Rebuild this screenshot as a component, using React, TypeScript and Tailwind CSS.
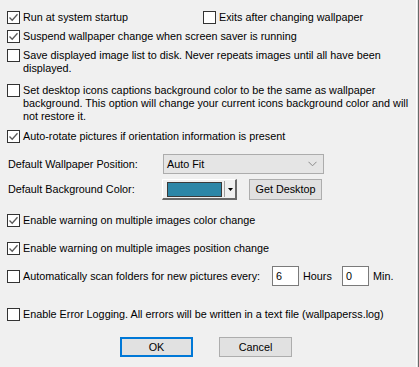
import React from "react";

function Box({ checked }: { checked?: boolean }) {
  return (
    <div className="w-[13px] h-[13px] shrink-0 border border-[#333333] bg-white flex items-center justify-center">
      {checked && (
        <svg width="11" height="11" viewBox="0 0 11 11">
          <path d="M1.5 5.5 L4.2 8.3 L9.5 2.2" fill="none" stroke="#5a5a5a" strokeWidth="1.3" />
        </svg>
      )}
    </div>
  );
}

function Check({ checked, children, className = "" }: { checked?: boolean; children: React.ReactNode; className?: string }) {
  return (
    <div className={"flex items-start gap-[3px] " + className}>
      <Box checked={checked} />
      <div className="leading-[13px]">{children}</div>
    </div>
  );
}

export default function App() {
  return (
    <div
      className="w-[419px] h-[367px] bg-[#f0f0f0] flex text-black text-[10.8px]"
      style={{ fontFamily: '"Liberation Sans", Arial, sans-serif' }}
    >
      <div className="flex-1 flex flex-col pl-[7px] pt-[11px]">
        <div className="flex">
          <Check checked className="w-[196px]">Run at system startup</Check>
          <Check>Exits after changing wallpaper</Check>
        </div>
        <Check checked className="mt-[6px]">Suspend wallpaper change when screen saver is running</Check>
        <Check className="mt-[6px]">
          Save displayed image list to disk. Never repeats images until all have been
          <br />
          displayed.
        </Check>
        <Check className="mt-[9px]">
          Set desktop icons captions background color to be the same as wallpaper
          <br />
          background. This option will change your current icons background color and will
          <br />
          not restore it.
        </Check>
        <Check checked className="mt-[7px]">Auto-rotate pictures if orientation information is present</Check>

        <div className="flex items-center mt-[11px]">
          <div className="w-[156px] pl-px">Default Wallpaper Position:</div>
          <div className="w-[161px] h-[20px] bg-[#e5e5e5] border border-[#acacac] flex items-center justify-between pl-[3px] pr-[6px]">
            <span>Auto Fit</span>
            <svg width="9" height="6" viewBox="0 0 9 6">
              <path d="M0.5 0.8 L4.5 4.8 L8.5 0.8" fill="none" stroke="#8a8a8a" strokeWidth="1" />
            </svg>
          </div>
        </div>

        <div className="flex items-center mt-[5px]">
          <div className="w-[155px] pl-px">Default Background Color:</div>
          <div className="w-[75px] h-[21px] flex bg-[#f0f0f0] border-t border-l border-white border-b-2 border-r-2 border-b-[#696969] border-r-[#696969]">
            <div className="flex-1 flex items-center pl-[4px] pr-[2px]">
              <div className="w-[55px] h-[15px] bg-[#2c86a7] border border-[#3a3a3a]" />
            </div>
            <div className="w-px bg-[#a0a0a0] my-[1px]" />
            <div className="w-[10px] flex items-center justify-center">
              <svg width="5" height="3" viewBox="0 0 5 3">
                <path d="M0 0 H5 L2.5 3 Z" fill="#000" />
              </svg>
            </div>
          </div>
          <div className="ml-[12px] w-[73px] h-[21px] bg-[#e1e1e1] border border-[#adadad] flex items-center justify-center">
            Get Desktop
          </div>
        </div>

        <Check checked className="mt-[14px]">Enable warning on multiple images color change</Check>
        <Check checked className="mt-[15px]">Enable warning on multiple images position change</Check>

        <div className="flex items-center mt-[11px] h-[20px]">
          <Check className="w-[265px]">Automatically scan folders for new pictures every:</Check>
          <div className="w-[27px] h-[20px] bg-white border border-[#7a7a7a] flex items-center pl-[3px]">6</div>
          <span className="ml-[4px] w-[39px]">Hours</span>
          <div className="w-[27px] h-[20px] bg-white border border-[#7a7a7a] flex items-center pl-[3px]">0</div>
          <span className="ml-[4px]">Min.</span>
        </div>

        <Check className="mt-[22px]">Enable Error Logging. All errors will be written in a text file (wallpaperss.log)</Check>

        <div className="flex mt-[16px] pl-[113px] gap-[26px]">
          <div className="w-[73px] h-[20px] bg-[#e1e1e1] border-2 border-[#0078d7] flex items-center justify-center">OK</div>
          <div className="w-[73px] h-[20px] bg-[#e1e1e1] border border-[#adadad] flex items-center justify-center">Cancel</div>
        </div>
      </div>
      <div className="w-px bg-white" />
      <div className="w-px bg-[#e3e3e3]" />
      <div className="w-px bg-[#696969]" />
    </div>
  );
}
